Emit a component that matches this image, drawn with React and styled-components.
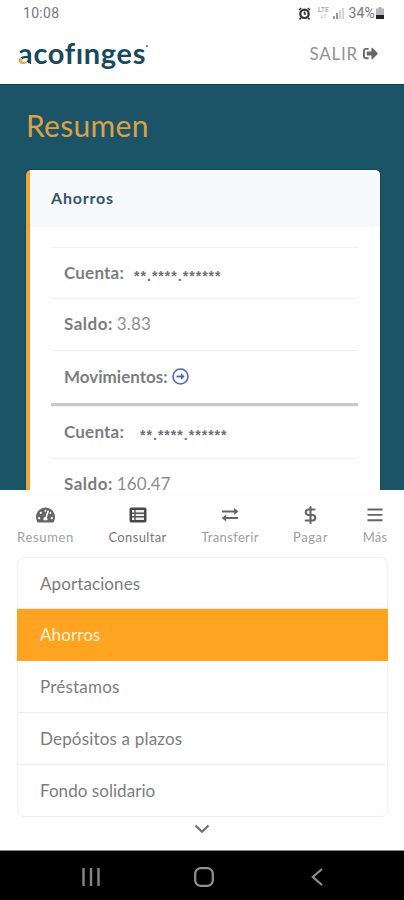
import React from 'react';
import styled, { createGlobalStyle } from 'styled-components';
import { DollarSign } from 'lucide-react';
import { FaSignOutAlt, FaTachometerAlt } from 'react-icons/fa';

const GlobalStyle = createGlobalStyle`
  * {
    box-sizing: border-box;
  }
  body {
    margin: 0;
    background: #fefefe;
    font-family: Lato, "Noto Sans", sans-serif;
    color: #77777b;
  }
`;

const Screen = styled.div`
  display: flex;
  flex-direction: column;
  width: 404px;
  height: 900px;
  overflow: hidden;
  background: #fefefe;
`;

const StatusBar = styled.div`
  display: flex;
  flex: none;
  align-items: center;
  justify-content: space-between;
  height: 26px;
  padding: 0 20px 0 23px;
  font-family: Roboto, sans-serif;
  font-size: 14px;
  line-height: 26px;
  color: #77777a;
`;

const Clock = styled.span`
  letter-spacing: 0.3px;
`;

const StatusIcons = styled.div`
  display: flex;
  align-items: center;
  svg {
    display: block;
  }
`;

const Percent = styled.span`
  margin: 0 1px 0 4px;
  font-size: 14px;
  letter-spacing: 0.2px;
`;

const Lte = styled.span`
  display: flex;
  flex-direction: column;
  align-items: center;
  width: 14px;
  margin: 0 3px 0 5px;
  font-size: 7px;
  line-height: 6px;
  color: #8c8c8e;
`;

const Header = styled.header`
  display: flex;
  flex: none;
  align-items: center;
  justify-content: space-between;
  height: 58px;
  padding: 0 26px 4px 18px;
`;

const Logo = styled.div`
  display: flex;
  align-items: flex-start;
  font-size: 29px;
  line-height: 34px;
  font-weight: 700;
  letter-spacing: 0.65px;
  color: #174a5e;
`;

const LogoAccent = styled.span`
  background: linear-gradient(
    ${props => props.angle},
    #e0ad55 ${props => props.stop},
    #174a5e ${props => props.stop}
  );
  background-clip: text;
  color: transparent;
`;

const LogoMark = styled.span`
  width: 2px;
  height: 2px;
  margin-top: 9px;
  border-radius: 50%;
  background: #52707c;
`;

const Logout = styled.button`
  display: flex;
  align-items: center;
  gap: 5px;
  padding: 1px 0 0;
  border: none;
  background: none;
  font-family: inherit;
  font-size: 17px;
  line-height: 20px;
  letter-spacing: 0.75px;
  color: #929296;
  svg {
    color: #666;
  }
`;

const Main = styled.main`
  flex: none;
  height: 406px;
  padding: 20px 24px 0 26px;
  overflow: hidden;
  background: #1b5466;
  border-top: 1px solid #0d4156;
`;

const Title = styled.h1`
  margin: 0 0 25px;
  font-size: 30px;
  line-height: 40px;
  font-weight: 400;
  letter-spacing: 0.3px;
  color: #dfa044;
`;

const Card = styled.section`
  height: 340px;
  border-left: 4px solid #eba53a;
  border-radius: 5px;
  overflow: hidden;
  background: #fff;
  box-shadow: 0 0 2px #063a50;
`;

const CardHeader = styled.h2`
  height: 57px;
  margin: 0 0 20px;
  padding: 0 21px;
  background: #f7f9fd;
  font-size: 16px;
  line-height: 55px;
  font-weight: 700;
  letter-spacing: 0.8px;
  color: #34566a;
`;

const Account = styled.dl`
  margin: 0 22px 0 21px;
  border-bottom: 3px solid #c9c9ca;
  &:last-child {
    border-bottom: none;
  }
`;

const Row = styled.div`
  display: flex;
  align-items: center;
  height: ${props => props.height || 52}px;
  padding: 0 13px 2px;
  border-top: 1px solid #f0f0f1;
  font-size: 17px;
`;

const Term = styled.dt`
  font-weight: 700;
  letter-spacing: ${props => props.spacing}px;
  color: #7d7d81;
`;

const Value = styled.dd`
  margin: 0 0 0 4px;
  letter-spacing: 0.1px;
  color: #8d8d91;
  svg {
    display: block;
  }
`;

const Mask = styled.dd`
  margin: 7px 0 0 ${props => props.offset}px;
  font-family: "Liberation Sans", sans-serif;
  font-size: 14px;
  line-height: 14px;
  font-weight: 700;
  letter-spacing: 1.03px;
  color: #6f6f73;
`;

const TabBar = styled.nav`
  display: grid;
  flex: none;
  grid-template-columns: 57px 127px 58px 103px 26px;
  height: 67px;
  padding: 15px 16px 0 17px;
`;

const Tab = styled.a`
  display: flex;
  flex-direction: column;
  align-items: center;
  gap: 3px;
  font-size: 13px;
  line-height: 18px;
  letter-spacing: ${props => props.spacing}px;
  white-space: nowrap;
  color: ${props => (props.active ? '#77777a' : '#a0a0a3')};
  svg {
    display: block;
    height: 20px;
    color: ${props => (props.active ? '#444' : '#666')};
  }
`;

const Menu = styled.ul`
  flex: none;
  width: 371px;
  height: 260px;
  margin: 0 0 0 17px;
  padding: 0;
  border: 1px solid #f1f1f2;
  border-radius: 7px;
  list-style: none;
`;

const MenuItem = styled.li`
  height: ${props => (props.first ? 51 : 52)}px;
  margin: 0 -1px;
  padding: 0 23px;
  border-bottom: 1px solid ${props => (props.active ? '#ffa421' : '#ededee')};
  background: ${props => (props.active ? '#ffa421' : 'transparent')};
  font-size: 17px;
  line-height: 51px;
  letter-spacing: ${props => props.spacing}px;
  color: ${props => (props.active ? '#fff2da' : '#7c7c80')};
  &:last-child {
    border-bottom: none;
  }
`;

const Collapse = styled.div`
  display: flex;
  flex: 1;
  justify-content: center;
  padding-top: 7px;
`;

const SystemBar = styled.footer`
  display: grid;
  flex: none;
  grid-template-columns: repeat(3, 113px);
  justify-content: center;
  align-items: center;
  justify-items: center;
  height: 50px;
  padding: 3px 0 0 4px;
  border-top: 1px solid #888;
  background: #000;
`;

const ArrowCircle = () => (
  <svg width="17" height="17" viewBox="0 0 17 17" fill="none" stroke="#4664c8">
    <circle cx="8.5" cy="8.5" r="7.5" strokeWidth="1.6" />
    <path d="M4.5 8.5H11" strokeWidth="1.8" />
    <path d="M9 5.3L12.7 8.5L9 11.7Z" fill="#4664c8" stroke="none" />
  </svg>
);

const ListIcon = () => (
  <svg width="18" height="20" viewBox="0 0 18 20">
    <rect x="0.5" y="2.5" width="17" height="15" rx="1.8" fill="#484848" />
    <path d="M3 5h12v10H3z" fill="#eee" />
    <path d="M6 5v10M3 8.3h12M3 11.7h12" stroke="#555" strokeWidth="1.4" />
  </svg>
);

const TransferIcon = () => (
  <svg width="18" height="20" viewBox="0 0 18 20" fill="#666">
    <path d="M1 5.6h12V3l4.5 3.5L13 10V7.4H1zM17 12.1H5.2V9.8L.6 13l4.6 3.4v-2.5H17z" />
  </svg>
);

const MenuIcon = () => (
  <svg width="16" height="20" viewBox="0 0 16 20" stroke="#646464" strokeWidth="1.9">
    <path d="M.5 4.5h15M.5 9.9h15M.5 15.3h15" />
  </svg>
);

const accounts = [
  { offset: 10, balance: '3.83', height: 51, gap: 4, movements: true },
  { offset: 16, balance: '160.47', height: 52, gap: 5 },
];

const tabs = [
  { label: 'Resumen', icon: <FaTachometerAlt size={19} />, spacing: 0.65 },
  { label: 'Consultar', icon: <ListIcon />, spacing: 0.35, active: true },
  { label: 'Transferir', icon: <TransferIcon />, spacing: 0.35 },
  { label: 'Pagar', icon: <DollarSign size={19} strokeWidth={2.7} />, spacing: 0.6 },
  { label: 'Más', icon: <MenuIcon />, spacing: 0.1 },
];

const items = [
  { label: 'Aportaciones', spacing: 0.1 },
  { label: 'Ahorros', spacing: 0.1, active: true },
  { label: 'Préstamos', spacing: 0.2 },
  { label: 'Depósitos a plazos', spacing: 0.18 },
  { label: 'Fondo solidario', spacing: 0.05 },
];

function AlarmIcon() {
  return (
    <svg width="13" height="13" viewBox="0 0 13 13" fill="none" stroke="#333">
      <circle cx="6.5" cy="6.8" r="4.2" strokeWidth="2.2" />
      <path d="M1 3l2.2-2M12 3L9.8 1M3 10.5l-1.5 2M10 10.5l1.5 2M6.5 4.5V7H8" strokeWidth="1.5" />
    </svg>
  );
}

function SignalIcon() {
  return (
    <svg width="11" height="12" viewBox="0 0 11 12">
      <path d="M0 9h2v3H0zM3 6h2v6H3z" fill="#999" />
      <path d="M6 3h2v9H6zM9 1h2v11H9z" fill="#d5d5d6" />
    </svg>
  );
}

function BatteryIcon() {
  return (
    <svg width="8" height="12" viewBox="0 0 8 12">
      <path d="M2.5 0h3v1.5H8V12H0V1.5h2.5z" fill="#b5b5b6" />
      <path d="M0 8h8v4H0z" fill="#222" />
    </svg>
  );
}

function App() {
  return (
    <Screen>
      <GlobalStyle />
      <StatusBar>
        <Clock>10:08</Clock>
        <StatusIcons>
          <AlarmIcon />
          <Lte>
            <span>LTE</span>
            <span>↓↑</span>
          </Lte>
          <SignalIcon />
          <Percent>34%</Percent>
          <BatteryIcon />
        </StatusIcons>
      </StatusBar>
      <Header>
        <Logo aria-label="acofinges">
          <span>
            <LogoAccent angle="35deg" stop="32%">a</LogoAccent>
            cofıng
            <LogoAccent angle="215deg" stop="36%">e</LogoAccent>
            s
          </span>
          <LogoMark />
        </Logo>
        <Logout>
          SALIR
          <FaSignOutAlt size={15} />
        </Logout>
      </Header>
      <Main>
        <Title>Resumen</Title>
        <Card>
          <CardHeader>Ahorros</CardHeader>
          {accounts.map(account => (
            <Account key={account.balance}>
              <Row height={account.height}>
                <Term spacing={0.2}>Cuenta:</Term>
                <Mask offset={account.offset}>**.****.******</Mask>
              </Row>
              <Row>
                <Term spacing={0.5}>Saldo:</Term>
                <Value>{account.balance}</Value>
              </Row>
              {account.movements && (
                <Row height={53}>
                  <Term spacing={0}>Movimientos:</Term>
                  <Value>
                    <ArrowCircle />
                  </Value>
                </Row>
              )}
            </Account>
          ))}
        </Card>
      </Main>
      <TabBar>
        {tabs.map(tab => (
          <Tab key={tab.label} active={tab.active ? 1 : undefined} spacing={tab.spacing}>
            {tab.icon}
            <span>{tab.label}</span>
          </Tab>
        ))}
      </TabBar>
      <Menu>
        {items.map((item, i) => (
          <MenuItem
            key={item.label}
            first={i === 0 ? 1 : undefined}
            active={item.active ? 1 : undefined}
            spacing={item.spacing}
          >
            {item.label}
          </MenuItem>
        ))}
      </Menu>
      <Collapse>
        <svg width="16" height="10" viewBox="0 0 16 10" fill="none" stroke="#707070" strokeWidth="2.2">
          <path d="M1.5 1.5L8 7.8l6.5-6.3" />
        </svg>
      </Collapse>
      <SystemBar>
        <svg width="18" height="18" viewBox="0 0 18 18" stroke="#858585" strokeWidth="2.4">
          <path d="M1.5 0v18M9 0v18M16.5 0v18" />
        </svg>
        <svg width="20" height="20" viewBox="0 0 20 20" fill="none" stroke="#909090" strokeWidth="2.2">
          <rect x="1.2" y="1.2" width="17.6" height="17.6" rx="5.5" />
        </svg>
        <svg width="12" height="18" viewBox="0 0 12 18" fill="none" stroke="#909090" strokeWidth="2.2">
          <path d="M11 1L1.8 9l9.2 8" />
        </svg>
      </SystemBar>
    </Screen>
  );
}

export default App;
